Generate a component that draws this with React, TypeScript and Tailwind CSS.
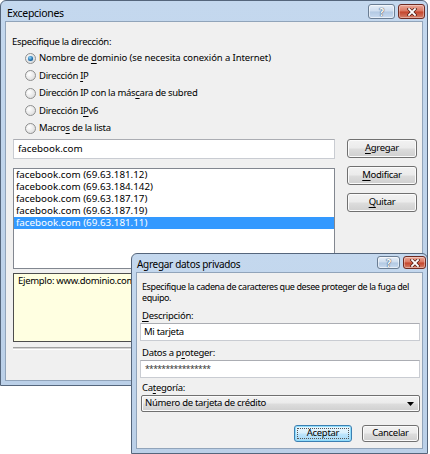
import { ReactNode } from 'react';

// Accelerator letter, underlined like a Windows mnemonic
const U = ({ children }: { children: ReactNode }) => (
    <span className="underline underline-offset-[1.5px] decoration-[1px]">{children}</span>
);

// Title bar "?" and close buttons
const CaptionButtons = ({ small }: { small?: boolean }) => {
    const size = small ? 'w-[23px] h-[13px]' : 'w-[27px] h-[15px]';
    return (
        <div className="flex gap-[3px]">
            <div
                className={`${size} rounded-[3px] border border-[#6a7d93] bg-[linear-gradient(#e6eef8_0%,#cddcee_48%,#b2c8e2_52%,#c9dbf0_100%)] shadow-[inset_0_0_0_1px_rgba(255,255,255,0.55)] flex items-center justify-center`}
            >
                <span className="text-[10px] leading-none font-bold text-white [text-shadow:0_0_1px_#2a3d55,0_0_1px_#2a3d55]">?</span>
            </div>
            <div
                className={`${size} rounded-[3px] border border-[#6e2b22] bg-[linear-gradient(#eba898_0%,#d97660_48%,#c4432a_52%,#d4806a_100%)] shadow-[inset_0_0_0_1px_rgba(255,255,255,0.35)] flex items-center justify-center`}
            >
                <svg width="10" height="8" viewBox="0 0 10 8">
                    <path d="M2 1 L8 7 M8 1 L2 7" stroke="#4a1a12" strokeWidth="3.2" strokeLinecap="square" />
                    <path d="M2 1 L8 7 M8 1 L2 7" stroke="#ffffff" strokeWidth="1.8" strokeLinecap="square" />
                </svg>
            </div>
        </div>
    );
};

const Radio = ({ checked }: { checked?: boolean }) => (
    <span className="w-[11px] h-[11px] shrink-0 rounded-full border border-[#8e8f8f] bg-[radial-gradient(circle_at_35%_35%,#ffffff,#e2e2e2_70%,#d0d0d0)] flex items-center justify-center">
        {checked && (
            <span className="w-[5px] h-[5px] rounded-full bg-[radial-gradient(circle_at_40%_35%,#8fd8ff,#1d6aa8_60%,#0e3d66)] shadow-[0_0_1px_#2c8fd3]" />
        )}
    </span>
);

const PushButton = ({ children, className = '' }: { children: ReactNode; className?: string }) => (
    <div
        className={`rounded-[3px] border border-[#707070] bg-[linear-gradient(#f2f2f2_0%,#ebebeb_48%,#dddddd_52%,#cfcfcf_100%)] shadow-[inset_0_0_0_1px_#fbfbfb] flex items-center justify-center text-black ${className}`}
    >
        {children}
    </div>
);

const TextBox = ({ children, className = '' }: { children?: ReactNode; className?: string }) => (
    <div className={`bg-white border border-[#c9ccd2] border-t-[#abadb3] flex items-center ${className}`}>{children}</div>
);

const entries = [
    'facebook.com (69.63.181.12)',
    'facebook.com (69.63.184.142)',
    'facebook.com (69.63.187.17)',
    'facebook.com (69.63.187.19)',
    'facebook.com (69.63.181.11)',
];

export default function App() {
    return (
        <div className="relative w-[430px] h-[454px] bg-white overflow-hidden font-['Noto_Sans',sans-serif] text-[9.5px] tracking-[-0.3px] text-black">
            {/* Excepciones window */}
            <div className="absolute left-0 top-0 w-[428px] h-[386px] rounded-t-[6px] border border-[#55667c] bg-[linear-gradient(#c4d8ee,#bbd0e8)] flex flex-col">
                <div className="h-[20px] flex items-start justify-between">
                    <span className="pl-[6px] pt-[5px] text-[10.5px] leading-[14px]">Excepciones</span>
                    <div className="pt-[3px] pr-[2px]">
                        <CaptionButtons />
                    </div>
                </div>
                <div className="mx-[4px] mb-[4px] flex-1 border border-[#91a4ba] bg-[#f0f0f0] pl-[7px] pr-[4px] pt-[14px] flex flex-col">
                    <div className="-ml-px leading-[12px]">Especifique la dirección:</div>
                    <div className="mt-[1.5px] pl-[12px] flex flex-col">
                        <div className="h-[17.5px] flex items-center gap-[3px]">
                            <Radio checked />
                            <span className="tracking-[-0.1px]">Nombre de <U>d</U>ominio (se necesita conexión a Internet)</span>
                        </div>
                        <div className="h-[17.5px] flex items-center gap-[3px]">
                            <Radio />
                            <span>Dirección <U>I</U>P</span>
                        </div>
                        <div className="h-[17.5px] flex items-center gap-[3px]">
                            <Radio />
                            <span>Dirección IP con la más<U>c</U>ara de subred</span>
                        </div>
                        <div className="h-[17.5px] flex items-center gap-[3px]">
                            <Radio />
                            <span>Dirección I<U>P</U>v6</span>
                        </div>
                        <div className="h-[17.5px] flex items-center gap-[3px]">
                            <Radio />
                            <span>Macro<U>s</U> de la lista</span>
                        </div>
                    </div>
                    <div className="mt-[2px] flex gap-[12px]">
                        <div className="w-[322px] flex flex-col">
                            <TextBox className="h-[20px] pl-[4px] text-[9.8px] tracking-normal">facebook.com</TextBox>
                            <div className="mt-[9px] h-[101px] bg-white border border-[#828790] flex flex-col text-[9.8px] tracking-normal">
                                {entries.map((e, i) => (
                                    <div
                                        key={e}
                                        className={`h-[12px] leading-[12px] pl-[2px] ${i === 4 ? 'bg-[#3399ff] text-white' : ''}`}
                                    >
                                        {e}
                                    </div>
                                ))}
                            </div>
                            <div className="mt-[4px] h-[69px] bg-[#ffffe1] border border-[#4d4d4d] pl-[4px] pt-[1px] leading-[12px]">
                                Ejemplo: www.dominio.com
                            </div>
                            <div className="mt-[5px] h-[3px] border-t border-[#a0a0a0] border-b border-b-white bg-[#d4d4d4]" />
                        </div>
                        <div className="w-[70px] flex flex-col gap-[8px]">
                            <PushButton className="h-[19px]">
                                <U>A</U>gregar
                            </PushButton>
                            <PushButton className="h-[19px]">
                                <U>M</U>odificar
                            </PushButton>
                            <PushButton className="h-[19px]">
                                <U>Q</U>uitar
                            </PushButton>
                        </div>
                    </div>
                </div>
            </div>

            {/* Agregar datos privados dialog */}
            <div className="absolute left-[131px] top-[253px] w-[297px] h-[201px] rounded-t-[6px] border border-[#55667c] bg-[linear-gradient(#c4d8ee,#bbd0e8)] flex flex-col">
                <div className="h-[18px] flex items-start justify-between">
                    <span className="pl-[5px] pt-[3px] text-[10px] leading-[14px]">Agregar datos privados</span>
                    <div className="pt-[2px] pr-[1px]">
                        <CaptionButtons small />
                    </div>
                </div>
                <div className="mx-[4px] mb-[4px] flex-1 border border-[#91a4ba] bg-[#f0f0f0] pl-[3px] pr-[2px] flex flex-col">
                    <p className="pl-[2px] pt-[9px] leading-[10.5px] text-[9px] tracking-[-0.4px]">
                        Especifique la cadena de caracteres que desee proteger de la fuga del equipo.
                    </p>
                    <div className="pl-[2px] mt-[7px] leading-[12px]">
                        <U>D</U>escripción:
                    </div>
                    <TextBox className="mt-[1px] h-[18px] pl-[3px]">Mi tarjeta</TextBox>
                    <div className="pl-[2px] mt-[6px] leading-[12px]">
                        Datos a p<U>r</U>oteger:
                    </div>
                    <TextBox className="mt-[1px] h-[18px] pl-[4px] text-[8.5px] text-[#333] tracking-[-0.6px]">
                        ****************
                    </TextBox>
                    <div className="pl-[2px] mt-[4px] leading-[12px]">
                        Ca<U>t</U>egoría:
                    </div>
                    <div className="mt-[1px] ml-[1px] h-[17px] rounded-[2px] border border-[#707070] bg-[linear-gradient(#f2f2f2_0%,#ebebeb_48%,#dddddd_52%,#cfcfcf_100%)] shadow-[inset_0_0_0_1px_#fbfbfb] flex items-center justify-between pl-[3px] pr-[5px]">
                        <span>Número de tarjeta de crédito</span>
                        <svg width="7" height="4" viewBox="0 0 7 4">
                            <path d="M0 0 H7 L3.5 4 Z" fill="#000" />
                        </svg>
                    </div>
                    <div className="mt-[13px] mr-[1px] flex justify-end gap-[10px]">
                        <div className="w-[58px] h-[17px] rounded-[3px] border border-[#3c7fb1] bg-[linear-gradient(#eaf6fd_0%,#d9f0fc_48%,#bee6fd_52%,#a7d9f5_100%)] shadow-[inset_0_0_0_1px_#8fdcfb] p-[2px]">
                            <div className="w-full h-full border border-dotted border-[#555] flex items-center justify-center">
                                Aceptar
                            </div>
                        </div>
                        <PushButton className="w-[57px] h-[17px]">Cancelar</PushButton>
                    </div>
                </div>
            </div>
        </div>
    );
}
